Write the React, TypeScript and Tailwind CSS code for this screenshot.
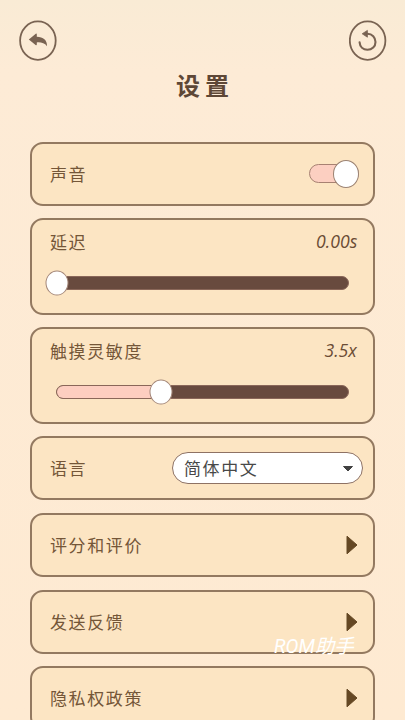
import type { ReactNode } from 'react';

const cardBase =
  'shrink-0 rounded-[13px] border-2 border-[#937960] bg-[#fce5c3] pl-[18px] pr-[10px]';

function Label({ children }: { children: ReactNode }) {
  return (
    <span className="whitespace-nowrap text-[17px] leading-[22px] tracking-[1.6px] text-[#745638]">
      {children}
    </span>
  );
}

function Row({ label, children }: { label: string; children: ReactNode }) {
  return (
    <div className={`${cardBase} flex h-16 items-center justify-between`}>
      <Label>{label}</Label>
      {children}
    </div>
  );
}

function Slider({ label, value, percent }: { label: string; value: string; percent: number }) {
  return (
    <div className={`${cardBase} h-[96.3px] pt-[11px]`}>
      <div className="flex items-center justify-between pr-[6px]">
        <Label>{label}</Label>
        <span className="relative -top-px origin-right scale-x-[0.93] font-['Open_Sans',sans-serif] text-[19px] italic leading-[22px] text-[#6b4c35]">
          {value}
        </span>
      </div>
      <div className="relative ml-[6px] mt-[22.3px] h-[14px] w-[293px] rounded-full border border-[#8a6759] bg-[#684a3e]">
        <div
          className="h-full rounded-l-full bg-[#fdcec0]"
          style={{ width: `${percent}%` }}
        />
        <div
          className="absolute top-1/2 h-[25px] w-[23px] -translate-x-1/2 -translate-y-1/2 rounded-[50%] border border-[#a38678] bg-white"
          style={{ left: `${percent}%` }}
        />
      </div>
    </div>
  );
}

function Arrow() {
  return (
    <svg className="mr-[5px] h-[20px] w-[12px]" viewBox="0 0 12 20">
      <path d="M1 1.2 11 10 1 18.8Z" fill="#654824" stroke="#654824" strokeLinejoin="round" />
    </svg>
  );
}

export default function App() {
  return (
    <main className="relative h-[720px] w-[405px] overflow-hidden bg-gradient-to-b from-[#f9ebd5] via-[#fdebd6] via-10% to-[#feead2] font-['LXGW_WenKai','KaiTi','Noto_Sans_CJK_SC',sans-serif]">
      <header className="flex h-[70px] items-start justify-between pl-[19px] pr-[18.5px] pt-[20px]">
        <button aria-label="返回">
          <svg width="38" height="41" viewBox="0 0 38 41">
            <ellipse cx="18.9" cy="20.6" rx="17.8" ry="19.2" fill="none" stroke="#796352" strokeWidth="1.8" />
            <path
              d="M9.8 19.4 16.8 13.8C17.4 13.4 17.8 13.7 17.8 14.4V16.8C24.2 16.8 28.3 20.3 28 26.2C25.6 23.2 22.4 22.1 17.8 22.4V24.6C17.8 25.3 17.2 25.5 16.6 25Z"
              fill="#796352"
            />
          </svg>
        </button>
        <button aria-label="重置">
          <svg width="38" height="41" viewBox="0 0 38 41">
            <ellipse cx="18.6" cy="20.6" rx="17.8" ry="19.2" fill="none" stroke="#796352" strokeWidth="1.8" />
            <path
              d="M10.6 22.4C10.9 26.9 14.2 29.8 18.4 29.8C23.1 29.8 26.5 26.4 26.5 21.9C26.5 17.4 23.1 13.8 18.6 13.8H17.4"
              fill="none"
              stroke="#796352"
              strokeWidth="2.1"
              strokeLinecap="round"
            />
            <path d="M13.2 13.8 18.4 10.4V17.2Z" fill="#796352" stroke="#796352" strokeWidth="0.8" strokeLinejoin="round" />
          </svg>
        </button>
      </header>

      <h1 className="h-[71.6px] pl-[176px] text-[24px] font-bold leading-[30px] tracking-[5px] text-[#5e4736]">
        设置
      </h1>

      <section className="flex flex-col gap-[12.7px] pl-[30px] pr-[30px]">
        <Row label="声音">
          <div className="relative mr-[4px] h-[19px] w-[50px] rounded-full border border-[#a78172] bg-[#fccfc1]">
            <div className="absolute -right-px top-1/2 h-[28px] w-[26px] -translate-y-1/2 rounded-[50%] border border-[#9b8272] bg-white" />
          </div>
        </Row>

        <Slider label="延迟" value="0.00s" percent={0} />
        <Slider label="触摸灵敏度" value="3.5x" percent={35.7} />

        <Row label="语言">
          <button className="flex h-8 w-[191px] items-center justify-between rounded-full border border-[#8e7264] bg-white pl-[11px] pr-[8px] text-[17px] tracking-[1.6px] text-[#484848]">
            <span className="relative -top-px">简体中文</span>
            <svg width="12" height="7" viewBox="0 0 12 7">
              <path d="M1.5 1.5H10.5L6 6Z" fill="#414141" stroke="#414141" strokeLinejoin="round" />
            </svg>
          </button>
        </Row>

        <Row label="评分和评价">
          <Arrow />
        </Row>
        <Row label="发送反馈">
          <Arrow />
        </Row>
        <Row label="隐私权政策">
          <Arrow />
        </Row>
      </section>

      <span className="absolute left-[274px] top-[635px] whitespace-nowrap font-[Roboto,'Noto_Sans_CJK_SC',sans-serif] text-[19.4px] italic leading-[24px] text-white">
        ROM助手
      </span>
    </main>
  );
}
